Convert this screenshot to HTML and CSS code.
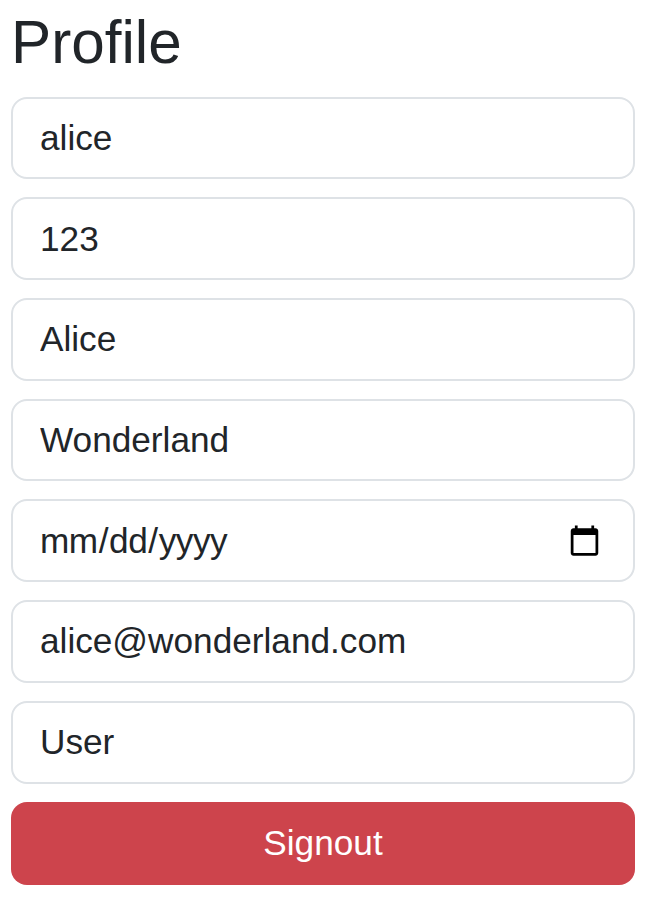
FILE: index.html
```html
<!DOCTYPE html>
<html lang="en">
<head>
<meta charset="utf-8">
<title>Profile</title>
<link rel="stylesheet" href="styles.css">
</head>
<body>
<main class="page">
  <h1 class="title">Profile</h1>
  <form class="form">
    <input class="field" type="text" value="alice">
    <input class="field" type="text" value="123">
    <input class="field" type="text" value="Alice">
    <input class="field" type="text" value="Wonderland">
    <input class="field field-date" type="date">
    <input class="field" type="text" value="alice@wonderland.com">
    <input class="field" type="text" value="User">
    <button class="signout" type="button">Signout</button>
  </form>
</main>
</body>
</html>
```
FILE: styles.css
```css
* { box-sizing: border-box; }
html, body { margin: 0; padding: 0; background: #fff; }
body { font-family: "Liberation Sans", Arial, sans-serif; color: #212529; }
.page { width: 654px; height: 898px; padding: 9px 19px 0 11px; overflow: hidden; }
.title { margin: 0 0 19.7px; font-size: 60.2px; line-height: 68px; font-weight: 400; color: #212529; }
.form { display: flex; flex-direction: column; gap: 18px; }
.field {
  display: block; width: 100%; height: 82.7px; padding: 0 26px 0 27px;
  font: 400 35.2px "Liberation Sans", Arial, sans-serif; color: #212529;
  background: #fff; border: 2px solid #dee2e6; border-radius: 16px; outline: none;
}
.field-date { letter-spacing: -0.45px; padding-left: 26px; }
.field-date::-webkit-calendar-picker-indicator { width: 33px; height: 33px; padding: 0; margin: 0 6px 0 0; background-size: 33px 33px; }
.signout {
  display: block; width: 100%; height: 83px; padding: 0;
  font: 400 35.2px "Liberation Sans", Arial, sans-serif; color: #fff;
  background: #cd444c; border: 0; border-radius: 16px;
}
```
